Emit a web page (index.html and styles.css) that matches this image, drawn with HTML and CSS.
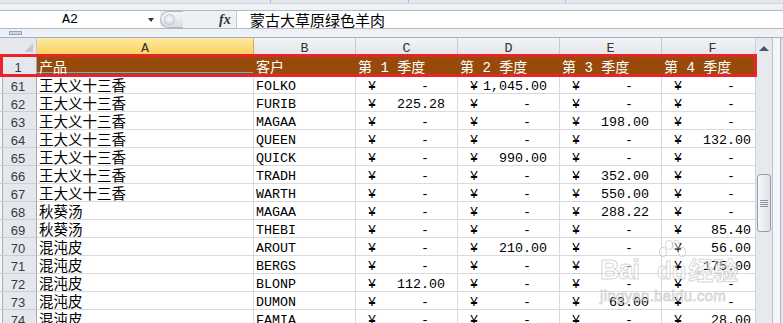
FILE: index.html
```html
<!DOCTYPE html>
<html lang="zh-CN">
<head>
    <meta charset="UTF-8">
    <title>销售数据</title>
    <link rel="stylesheet" href="styles.css">
</head>
<body>

    <!-- bas du ruban -->
    <div class="ribbon-edge">
        <div class="grp g1"></div>
        <div class="grp g2"></div>
        <div class="grp g3"></div>
    </div>

    <!-- barre de formule -->
    <div class="fbar">
        <div class="namebox">
            <span class="ref">A2</span>
            <svg width="6" height="4" viewBox="0 0 6 4"><path d="M0 0h6L3 4z" fill="#333"/></svg>
        </div>
        <div class="fx-area">
            <div class="knob"><span></span></div>
            <span class="fx">fx</span>
        </div>
        <div class="formula">蒙古大草原绿色羊肉</div>
    </div>

    <div class="strip"><div class="expand"></div></div>

    <div class="sheet">
        <div class="grid">
            <div class="corner"></div>
            <div class="ch sel">A</div>
            <div class="ch">B</div>
            <div class="ch">C</div>
            <div class="ch">D</div>
            <div class="ch">E</div>
            <div class="ch">F</div>

            <div class="rh r1h">1</div>
            <div class="r1 a1">产品</div>
            <div class="r1">客户</div>
            <div class="r1">第 1 季度</div>
            <div class="r1">第 2 季度</div>
            <div class="r1">第 3 季度</div>
            <div class="r1">第 4 季度</div>

            <div class="rh">61</div><div class="cn">王大义十三香</div><div class="en">FOLKO</div>
            <div class="amt"><span>¥</span><span class="z">-</span></div>
            <div class="amt"><span>¥</span><span>1,045.00</span></div>
            <div class="amt"><span>¥</span><span class="z">-</span></div>
            <div class="amt"><span>¥</span><span class="z">-</span></div>

            <div class="rh">62</div><div class="cn">王大义十三香</div><div class="en">FURIB</div>
            <div class="amt"><span>¥</span><span>225.28</span></div>
            <div class="amt"><span>¥</span><span class="z">-</span></div>
            <div class="amt"><span>¥</span><span class="z">-</span></div>
            <div class="amt"><span>¥</span><span class="z">-</span></div>

            <div class="rh">63</div><div class="cn">王大义十三香</div><div class="en">MAGAA</div>
            <div class="amt"><span>¥</span><span class="z">-</span></div>
            <div class="amt"><span>¥</span><span class="z">-</span></div>
            <div class="amt"><span>¥</span><span>198.00</span></div>
            <div class="amt"><span>¥</span><span class="z">-</span></div>

            <div class="rh">64</div><div class="cn">王大义十三香</div><div class="en">QUEEN</div>
            <div class="amt"><span>¥</span><span class="z">-</span></div>
            <div class="amt"><span>¥</span><span class="z">-</span></div>
            <div class="amt"><span>¥</span><span class="z">-</span></div>
            <div class="amt"><span>¥</span><span>132.00</span></div>

            <div class="rh">65</div><div class="cn">王大义十三香</div><div class="en">QUICK</div>
            <div class="amt"><span>¥</span><span class="z">-</span></div>
            <div class="amt"><span>¥</span><span>990.00</span></div>
            <div class="amt"><span>¥</span><span class="z">-</span></div>
            <div class="amt"><span>¥</span><span class="z">-</span></div>

            <div class="rh">66</div><div class="cn">王大义十三香</div><div class="en">TRADH</div>
            <div class="amt"><span>¥</span><span class="z">-</span></div>
            <div class="amt"><span>¥</span><span class="z">-</span></div>
            <div class="amt"><span>¥</span><span>352.00</span></div>
            <div class="amt"><span>¥</span><span class="z">-</span></div>

            <div class="rh">67</div><div class="cn">王大义十三香</div><div class="en">WARTH</div>
            <div class="amt"><span>¥</span><span class="z">-</span></div>
            <div class="amt"><span>¥</span><span class="z">-</span></div>
            <div class="amt"><span>¥</span><span>550.00</span></div>
            <div class="amt"><span>¥</span><span class="z">-</span></div>

            <div class="rh">68</div><div class="cn">秋葵汤</div><div class="en">MAGAA</div>
            <div class="amt"><span>¥</span><span class="z">-</span></div>
            <div class="amt"><span>¥</span><span class="z">-</span></div>
            <div class="amt"><span>¥</span><span>288.22</span></div>
            <div class="amt"><span>¥</span><span class="z">-</span></div>

            <div class="rh">69</div><div class="cn">秋葵汤</div><div class="en">THEBI</div>
            <div class="amt"><span>¥</span><span class="z">-</span></div>
            <div class="amt"><span>¥</span><span class="z">-</span></div>
            <div class="amt"><span>¥</span><span class="z">-</span></div>
            <div class="amt"><span>¥</span><span>85.40</span></div>

            <div class="rh">70</div><div class="cn">混沌皮</div><div class="en">AROUT</div>
            <div class="amt"><span>¥</span><span class="z">-</span></div>
            <div class="amt"><span>¥</span><span>210.00</span></div>
            <div class="amt"><span>¥</span><span class="z">-</span></div>
            <div class="amt"><span>¥</span><span>56.00</span></div>

            <div class="rh">71</div><div class="cn">混沌皮</div><div class="en">BERGS</div>
            <div class="amt"><span>¥</span><span class="z">-</span></div>
            <div class="amt"><span>¥</span><span class="z">-</span></div>
            <div class="amt"><span>¥</span><span class="z">-</span></div>
            <div class="amt"><span>¥</span><span>175.00</span></div>

            <div class="rh">72</div><div class="cn">混沌皮</div><div class="en">BLONP</div>
            <div class="amt"><span>¥</span><span>112.00</span></div>
            <div class="amt"><span>¥</span><span class="z">-</span></div>
            <div class="amt"><span>¥</span><span class="z">-</span></div>
            <div class="amt"><span>¥</span><span class="z">-</span></div>

            <div class="rh">73</div><div class="cn">混沌皮</div><div class="en">DUMON</div>
            <div class="amt"><span>¥</span><span class="z">-</span></div>
            <div class="amt"><span>¥</span><span class="z">-</span></div>
            <div class="amt"><span>¥</span><span>63.00</span></div>
            <div class="amt"><span>¥</span><span class="z">-</span></div>

            <div class="rh">74</div><div class="cn">混沌皮</div><div class="en">FAMIA</div>
            <div class="amt"><span>¥</span><span class="z">-</span></div>
            <div class="amt"><span>¥</span><span class="z">-</span></div>
            <div class="amt"><span>¥</span><span class="z">-</span></div>
            <div class="amt"><span>¥</span><span>28.00</span></div>
        </div>

        <!-- barre de défilement verticale -->
        <div class="vscroll">
            <svg class="up" width="10" height="5" viewBox="0 0 10 5"><path d="M0 5L5 0l5 5z" fill="#4d5663"/></svg>
            <div class="thumb"><span class="grip"></span></div>
        </div>
        <div class="edge"></div>

        <!-- cadre rouge de la ligne 1 -->
        <div class="hl"></div>

        <!-- filigrane -->
        <div class="wm">
            <div class="wm-line">
                <span class="wm-bai">Bai</span>
                <span class="wm-paw">
                    <svg width="28" height="20" viewBox="0 0 28 20">
                        <ellipse cx="5" cy="12" rx="3.5" ry="4.5"/>
                        <ellipse cx="11" cy="5" rx="3.5" ry="4.5"/>
                        <ellipse cx="18" cy="5" rx="3.5" ry="4.5"/>
                        <ellipse cx="24" cy="12" rx="3.5" ry="4.5"/>
                    </svg>
                    <span class="wm-du">du</span>
                </span>
                <span class="wm-cn">经验</span>
            </div>
            <div class="wm-url">jingyan.baidu.com</div>
        </div>
    </div>

</body>
</html>
```

FILE: styles.css
```css
* {
    box-sizing: border-box;
}
body {
    margin: 0;
    width: 783px;
    height: 323px;
    overflow: hidden;
    background-color: #eef1f5;
    font-family: "Liberation Sans", "Noto Sans CJK SC", sans-serif;
    color: #000;
}
.ribbon-edge {
    display: flex;
    height: 4px;
    background-color: #e3e6ea;
    border-bottom: 1px solid #d0d5db;
}
.ribbon-edge .grp {
    border-right: 1px solid #b9bfc7;
}
.g1 { width: 271px; }
.g2 { width: 138px; }
.g3 { width: 157px; }

.fbar {
    display: flex;
    height: 19px;
    margin-top: 6px;
    background-color: #fff;
    border-top: 1px solid #b3b9c1;
    border-bottom: 1px solid #b3b9c1;
}
.namebox {
    display: flex;
    align-items: center;
    width: 160px;
}
.namebox .ref {
    width: 140px;
    text-align: center;
    font: 13.33px/17px "Liberation Mono", monospace;
}
.namebox svg {
    margin-left: 8px;
}
.fx-area {
    display: flex;
    align-items: center;
    width: 77px;
    background-color: #eef0f3;
    border-right: 1px solid #c4c9d0;
}
.knob {
    display: flex;
    align-items: center;
    width: 23px;
    height: 17px;
    padding-left: 3px;
    border: 1px solid #b4bac3;
    border-right: none;
    border-radius: 9px 0 0 9px;
    background: linear-gradient(#f6f7f9, #d7dce2);
}
.knob span {
    width: 11px;
    height: 11px;
    border-radius: 50%;
    border: 1px solid #c1c6cd;
    background: radial-gradient(circle at 50% 40%, #fafbfc, #cfd4db);
}
.fx {
    margin-left: 36px;
    font: italic bold 14px/17px "Liberation Serif", serif;
    color: #333;
}
.formula {
    flex: 1;
    padding-left: 13px;
    font: 15px/17px "Noto Sans CJK SC", sans-serif;
}

.strip {
    height: 8px;
    padding: 2px 0 0 9px;
}
.expand {
    width: 13px;
    height: 4px;
    background-color: #c9d7e8;
    border: 1px solid #8da6c4;
}

/* feuille */
.sheet {
    position: relative;
    display: flex;
    height: 286px;
    border-top: 1px solid #a7b1bd;
}
.grid {
    width: 755px;
    overflow: hidden;
    display: grid;
    grid-template-columns: 37px 217px repeat(5, 102px);
    grid-template-rows: 17px 21px;
    grid-auto-rows: 18px;
    align-content: start;
    background-color: #fff;
}
.grid > div {
    white-space: nowrap;
    border-right: 1px solid #dadada;
    border-bottom: 1px solid #dadada;
}
.corner {
    background: linear-gradient(to top left, #c3c9d0 50%, transparent 50%) no-repeat right 3px bottom 2px / 8px 8px, #e4e7ec;
    border-right-color: #c5cad1 !important;
    border-bottom-color: #9fabb9 !important;
}
.ch {
    padding-top: 5px;
    text-align: center;
    font: 13.33px/11px "Liberation Mono", monospace;
    color: #333;
    background: linear-gradient(#f3f4f6, #e3e6ea);
    border-right-color: #c5cad1 !important;
    border-bottom-color: #9fabb9 !important;
}
.ch.sel {
    background: linear-gradient(#fde9a3, #fbd35f);
    border-right-color: #e2a84a !important;
}
.rh {
    padding-top: 4px;
    text-align: center;
    font: 13px/13px "Liberation Sans", sans-serif;
    color: #3a3a3a;
    background: linear-gradient(to right, #f4f5f7 0 2px, #a9b1bb 2px 3px, #e4e7ec 3px);
    border-right-color: #9eaab8 !important;
    border-bottom-color: #c9cfd7 !important;
}
.r1h {
    padding-top: 6px;
}
.r1 {
    padding: 7px 0 0 2px;
    font: 14px/13px "Liberation Mono", "Noto Sans CJK SC", monospace;
    color: #fff;
    background-color: #974a0a;
    border-right-color: #974a0a !important;
    border-bottom-color: #974a0a !important;
}
.r1.a1 {
    background: linear-gradient(to top, transparent 2px, #72aee6 2px 3px, transparent 3px), #974a0a;
}
.cn {
    padding: 2px 0 0 2px;
    font: 14.5px/13px "Noto Sans CJK SC", sans-serif;
}
.en {
    padding: 5px 0 0 2px;
    font: 13.33px/12px "Liberation Mono", monospace;
}
.amt {
    display: flex;
    justify-content: space-between;
    padding: 5px 12px 0 12px;
    font: 13.33px/12px "Liberation Mono", monospace;
}
.amt .z {
    padding-right: 16px;
}

/* défilement */
.vscroll {
    display: flex;
    flex-direction: column;
    align-items: center;
    width: 17px;
    background-color: #e6eaef;
    border-left: 1px solid #cdd3da;
}
.up {
    margin-top: 8px;
}
.thumb {
    display: flex;
    align-items: center;
    justify-content: center;
    width: 14px;
    height: 58px;
    margin-top: 123px;
    border: 1px solid #949eab;
    border-radius: 3px;
    background: linear-gradient(to right, #f6f8fa, #dde2e8);
}
.grip {
    width: 8px;
    height: 7px;
    background: repeating-linear-gradient(#8a94a1 0 1px, transparent 1px 2px);
}
.edge {
    flex: 1;
    border-left: 1px solid #b8c0ca;
    background: linear-gradient(to right, #f4f6f9 0 7px, #aab4c0 7px 8px, #dfe6ef 8px);
}

.hl {
    position: absolute;
    left: 0;
    top: 16px;
    width: 757px;
    height: 23px;
    border: 3px solid #e8232a;
}

/* filigrane */
.wm {
    position: absolute;
    left: 600px;
    top: 202px;
    color: rgba(255, 255, 255, 0.5);
    -webkit-text-stroke: 1px rgba(150, 150, 150, 0.4);
}
.wm-line {
    display: flex;
    align-items: flex-end;
}
.wm-bai {
    font: bold 27px/24px "Liberation Sans", sans-serif;
    letter-spacing: -1px;
}
.wm-paw {
    display: flex;
    flex-direction: column;
    align-items: center;
    margin-left: 18px;
}
.wm-paw svg {
    fill: rgba(255, 255, 255, 0.4);
    stroke: rgba(150, 150, 150, 0.4);
}
.wm-du {
    font: bold 24px/22px "Liberation Sans", sans-serif;
}
.wm-cn {
    margin-left: 2px;
    font: bold 25px/26px "Noto Sans CJK SC", sans-serif;
}
.wm-url {
    margin-top: 6px;
    font: 15px/16px "Liberation Sans", sans-serif;
    letter-spacing: 0.3px;
}
```
